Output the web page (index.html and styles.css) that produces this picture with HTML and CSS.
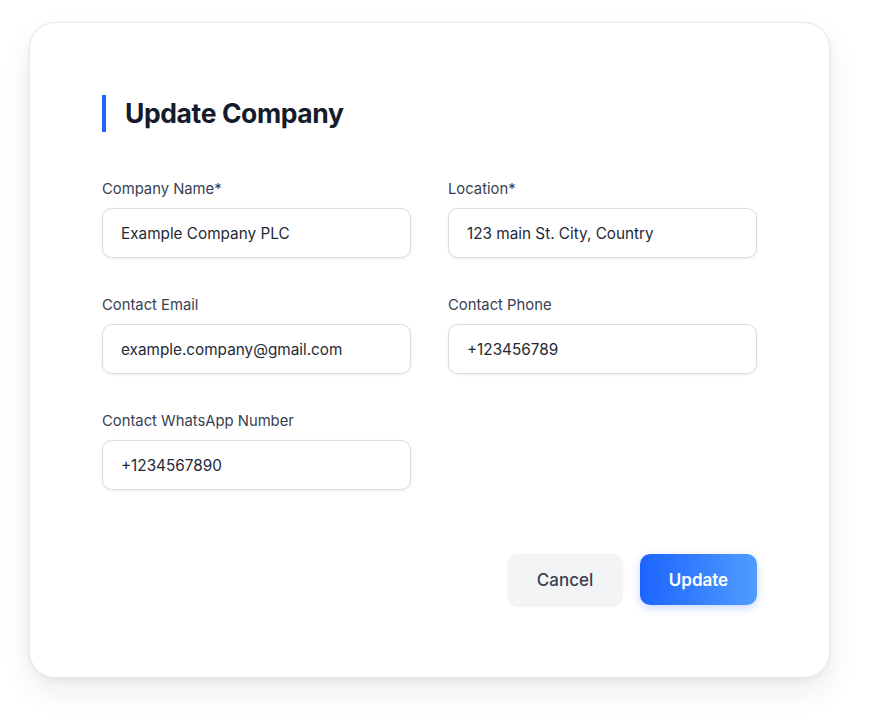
FILE: index.html
```html
<!DOCTYPE html>
<html lang="en">
<head>
    <meta charset="UTF-8">
    <meta name="viewport" content="width=device-width, initial-scale=1.0">
    <title>Update Company</title>
    <link rel="stylesheet" href="styles.css">
</head>
<body>

    <div class="card">
        <h1 class="title">Update Company</h1>

        <form class="fields">
            <div class="field">
                <label for="name">Company Name*</label>
                <input id="name" value="Example Company PLC">
            </div>
            <div class="field">
                <label for="location">Location*</label>
                <input id="location" value="123 main St. City, Country">
            </div>
            <div class="field">
                <label for="email">Contact Email</label>
                <input id="email" value="example.company@gmail.com">
            </div>
            <div class="field">
                <label for="phone">Contact Phone</label>
                <input id="phone" value="+123456789">
            </div>
            <div class="field">
                <label for="whatsapp">Contact WhatsApp Number</label>
                <input id="whatsapp" value="+1234567890">
            </div>
        </form>

        <div class="actions">
            <button class="btn cancel">Cancel</button>
            <button class="btn update">Update</button>
        </div>
    </div>

</body>
</html>
```

FILE: styles.css
```css
body {
    font-family: Inter, "Noto Sans", sans-serif;
    margin: 0;
    padding: 22px 0 60px 29px;
    background: #ffffff;
}

.card {
    width: 655px;
    padding: 72px;
    border: 1px solid #e6e7ea;
    border-radius: 26px;
    background: #fff;
    box-shadow: 0 14px 30px rgba(17, 24, 39, 0.08), 0 3px 6px rgba(17, 24, 39, 0.05);
}

.title {
    margin: 0 0 47px 0;
    padding-left: 19px;
    border-left: 4px solid #1e66ff;
    font-size: 26.5px;
    line-height: 37px;
    font-weight: 700;
    letter-spacing: -0.4px;
    color: #141c2b;
}

.fields {
    display: grid;
    grid-template-columns: 309px 309px;
    column-gap: 37px;
    row-gap: 37px;
}

.field label {
    display: block;
    font-size: 14.8px;
    line-height: 20px;
    color: #374151;
    margin-bottom: 9px;
}

.field input {
    width: 100%;
    height: 50px;
    box-sizing: border-box;
    padding: 0 18px;
    border: 1px solid #d9dce1;
    border-radius: 10px;
    font-family: inherit;
    font-size: 15.3px;
    color: #1f2937;
    background: #fff;
    box-shadow: 0 1px 3px rgba(17, 24, 39, 0.08);
    outline: none;
}

.actions {
    display: flex;
    justify-content: flex-end;
    gap: 18px;
    margin-top: 64px;
}

.btn {
    height: 51px;
    border: none;
    border-radius: 10px;
    font-family: inherit;
    font-size: 17px;
    cursor: pointer;
}

.cancel {
    width: 114px;
    background: #f3f4f6;
    color: #374151;
    font-weight: 500;
    box-shadow: 0 1px 3px rgba(17, 24, 39, 0.1);
}

.update {
    width: 117px;
    background: linear-gradient(90deg, #1d64ff, #4f9cff);
    color: #fff;
    font-weight: 600;
    box-shadow: 0 3px 8px rgba(30, 100, 255, 0.25);
}
```
